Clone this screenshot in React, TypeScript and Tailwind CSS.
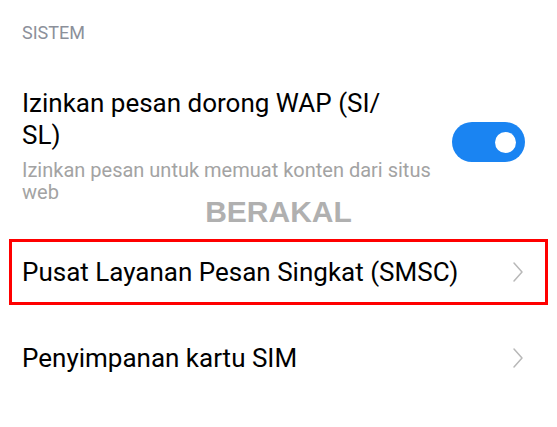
const Chevron = () => (
  <svg width="12" height="22" viewBox="0 0 12 22" fill="none" className="shrink-0">
    <path d="M2 2 L10 11 L2 20" stroke="#b8b8b8" strokeWidth="1.5" strokeLinecap="round" strokeLinejoin="round" />
  </svg>
);

const Toggle = () => (
  <div className="w-[73px] h-[40px] rounded-full bg-[#1a84f2] flex items-center justify-end pr-[9px] shrink-0 mb-[6px]">
    <div className="w-[21px] h-[21px] rounded-full bg-white" />
  </div>
);

const App = () => {
  return (
    <div className="w-[557px] h-[427px] bg-white overflow-hidden font-['Roboto',sans-serif]">
      <div className="pl-[22px] pt-[23px] text-[18px] leading-[20px] text-[#8c909a]">SISTEM</div>

      {/* WAP push row */}
      <div className="flex items-center pl-[22px] pr-[32px] mt-[44px]">
        <div className="flex-1">
          <div className="text-[26px] leading-[32px] text-black">
            Izinkan pesan dorong WAP (SI/
            <br />
            SL)
          </div>
          <div className="mt-[8px] text-[20px] leading-[22px] text-[#a3a3a3]">
            Izinkan pesan untuk memuat konten dari situs
            <br />
            web
          </div>
        </div>
        <Toggle />
      </div>

      <div className="-mt-[6px] text-center font-['Liberation_Sans',sans-serif] font-bold text-[30px] leading-[30px] text-[#b0b0b0]">
        BERAKAL
      </div>

      <div className="mx-[9px] mt-[12px] h-[66px] border-[3px] border-[#ff0000] flex items-center justify-between pl-[10px] pr-[21px]">
        <span className="text-[26px] text-black">Pusat Layanan Pesan Singkat (SMSC)</span>
        <Chevron />
      </div>

      <div className="flex items-center justify-between pl-[22px] pr-[33px] h-[64px] mt-[21px]">
        <span className="text-[26px] text-black">Penyimpanan kartu SIM</span>
        <Chevron />
      </div>
    </div>
  );
};

export default App;
